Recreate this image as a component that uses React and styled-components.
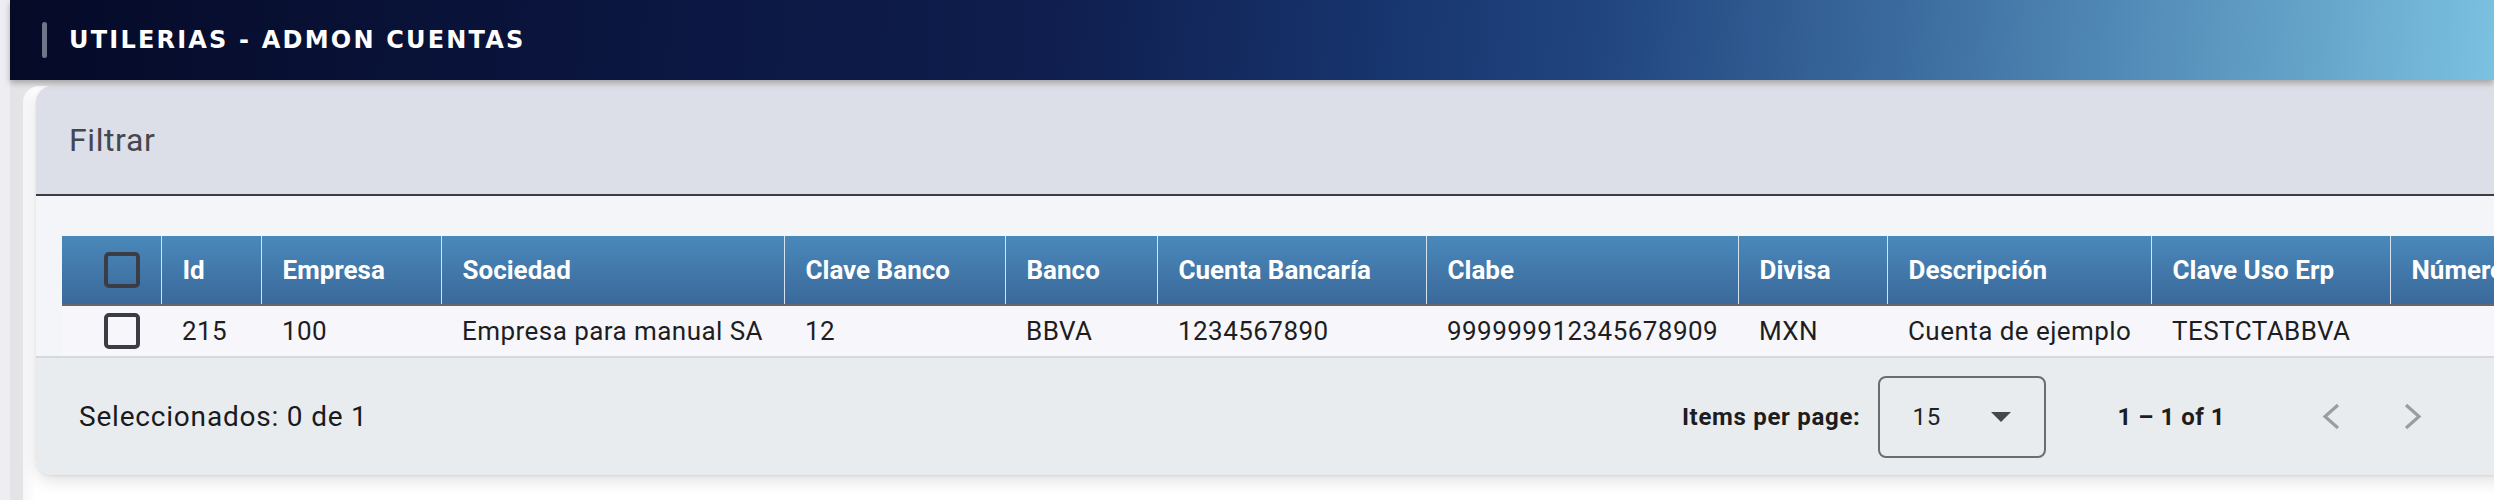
import styled, { createGlobalStyle } from "styled-components";

const GlobalStyle = createGlobalStyle`
  html, body {
    margin: 0;
    padding: 0;
    height: 100%;
    overflow: hidden;
    background: #ececef;
    font-family: Roboto, "Liberation Sans", sans-serif;
  }
  #root {
    height: 100%;
  }
`;

const columns = [
  { label: "Id", width: 100 },
  { label: "Empresa", width: 180 },
  { label: "Sociedad", width: 343 },
  { label: "Clave Banco", width: 221 },
  { label: "Banco", width: 152 },
  { label: "Cuenta Bancaría", width: 269 },
  { label: "Clabe", width: 312 },
  { label: "Divisa", width: 149 },
  { label: "Descripción", width: 264 },
  { label: "Clave Uso Erp", width: 239 },
  { label: "Número de Cuenta", width: 300 },
];

const rows = [
  [
    "215",
    "100",
    "Empresa para manual SA",
    "12",
    "BBVA",
    "1234567890",
    "999999912345678909",
    "MXN",
    "Cuenta de ejemplo",
    "TESTCTABBVA",
    "",
  ],
];

function Chevron({ dir }) {
  const pts = dir === "left" ? "16,2 3,13.5 16,25" : "3,2 16,13.5 3,25";
  return (
    <svg width="19" height="27" viewBox="0 0 19 27">
      <polyline
        points={pts}
        fill="none"
        stroke="#9c9da1"
        strokeWidth="3.2"
        strokeLinejoin="miter"
      />
    </svg>
  );
}

function App() {
  return (
    <Page>
      <GlobalStyle />
      <SideRail />
      <Main>
        <TopBar>
          <Accent />
          <Title>UTILERIAS - ADMON CUENTAS</Title>
        </TopBar>
        <Content>
          <Sheet>
            <Card>
              <FilterBar>Filtrar</FilterBar>
              <TableArea>
                <Table>
                  <colgroup>
                    <col style={{ width: 99 }} />
                    {columns.map((c) => (
                      <col key={c.label} style={{ width: c.width }} />
                    ))}
                  </colgroup>
                  <thead>
                    <tr>
                      <HeadCell>
                        <Check />
                      </HeadCell>
                      {columns.map((c) => (
                        <HeadCell key={c.label}>{c.label}</HeadCell>
                      ))}
                    </tr>
                  </thead>
                  <tbody>
                    {rows.map((r) => (
                      <tr key={r[0]}>
                        <SelectCell>
                          <Check />
                        </SelectCell>
                        {r.map((v, i) => (
                          <Cell key={i}>{v}</Cell>
                        ))}
                      </tr>
                    ))}
                  </tbody>
                </Table>
              </TableArea>
              <Footer>
                <Selected>Seleccionados: 0 de 1</Selected>
                <Paginator>
                  <PageLabel>Items per page:</PageLabel>
                  <SizeSelect>
                    <span>15</span>
                    <Caret />
                  </SizeSelect>
                  <RangeLabel>1 – 1 of 1</RangeLabel>
                  <NavButton aria-label="Previous page">
                    <Chevron dir="left" />
                  </NavButton>
                  <NavButton aria-label="Next page">
                    <Chevron dir="right" />
                  </NavButton>
                </Paginator>
              </Footer>
            </Card>
          </Sheet>
        </Content>
      </Main>
    </Page>
  );
}

const Page = styled.div`
  display: flex;
  height: 100%;
  width: 100%;
`;

const SideRail = styled.div`
  width: 10px;
  flex: none;
  background: #eeeef2;
`;

const Main = styled.div`
  flex: 1;
  min-width: 0;
  display: flex;
  flex-direction: column;
`;

const TopBar = styled.header`
  height: 80px;
  flex: none;
  display: flex;
  align-items: center;
  padding-left: 32px;
  position: relative;
  z-index: 2;
  background: linear-gradient(
    95deg,
    #050a27 0%,
    #0b1640 25%,
    #0f1e4e 42%,
    #183670 56%,
    #21457f 64%,
    #3b6b9e 76%,
    #4f87b4 84%,
    #64a2c8 92%,
    #7bc1e0 100%
  );
  box-shadow: 0 3px 6px rgba(0, 0, 0, 0.28);
`;

const Accent = styled.span`
  width: 5px;
  height: 36px;
  border-radius: 3px;
  background: #70748a;
`;

const Title = styled.h1`
  margin: 0 0 0 22px;
  font-family: "DejaVu Sans", Verdana, sans-serif;
  font-weight: 700;
  font-size: 24px;
  letter-spacing: 2.2px;
  color: #ffffff;
`;

const Content = styled.main`
  flex: 1;
  background: #e4e4e7;
  padding: 6px 0 0 13px;
  overflow: hidden;
`;

const Sheet = styled.div`
  height: 100%;
  background: linear-gradient(90deg, #f6f6f7 0px, #ffffff 13px);
  border-top-left-radius: 16px;
  padding-left: 13px;
  box-sizing: border-box;
`;

const Card = styled.section`
  width: 2560px;
  border-radius: 16px;
  overflow: hidden;
  box-shadow: 0 6px 16px rgba(0, 0, 0, 0.12), 0 1px 3px rgba(0, 0, 0, 0.08);
`;

const FilterBar = styled.div`
  height: 108px;
  display: flex;
  align-items: center;
  padding-left: 33px;
  background: #dcdfe8;
  border-bottom: 2px solid #3b3d44;
  font-size: 32px;
  letter-spacing: 0.6px;
  color: #45474f;
`;

const TableArea = styled.div`
  background: #f4f5f9;
  padding: 40px 0 0 26px;
`;

const Table = styled.table`
  border-collapse: collapse;
  table-layout: fixed;
  width: 2588px;
`;

const HeadCell = styled.th`
  height: 68px;
  padding: 0 0 0 21px;
  text-align: left;
  font-size: 26px;
  font-weight: 700;
  color: #ffffff;
  white-space: nowrap;
  overflow: hidden;
  background: linear-gradient(180deg, #4a88ba 0%, #3a699a 100%);
  border-bottom: 2px solid #64676e;
  & + & {
    border-left: 1px solid rgba(180, 205, 230, 0.45);
  }
  &:first-child {
    padding-left: 42px;
  }
`;

const Cell = styled.td`
  height: 50px;
  padding: 0 0 0 21px;
  background: #f7f7fb;
  font-size: 26px;
  letter-spacing: 0.45px;
  color: #1e1e22;
  white-space: nowrap;
  overflow: hidden;
`;

const SelectCell = styled(Cell)`
  padding-left: 42px;
  box-shadow: 3px 0 5px rgba(0, 0, 0, 0.05);
  position: relative;
`;

const Check = styled.span`
  display: block;
  width: 36px;
  height: 36px;
  box-sizing: border-box;
  border: 4px solid #3c3d44;
  border-radius: 5px;
`;

const Footer = styled.div`
  height: 117px;
  display: flex;
  align-items: center;
  padding: 0 144px 0 43px;
  background: #e9ecef;
  border-top: 2px solid #d5d8dc;
`;

const Selected = styled.span`
  font-size: 28px;
  letter-spacing: 0.8px;
  color: #1a1a1d;
`;

const Paginator = styled.div`
  margin-left: auto;
  display: flex;
  align-items: center;
`;

const PageLabel = styled.span`
  font-size: 24px;
  font-weight: 700;
  letter-spacing: 0.7px;
  color: #1d1d20;
  margin-right: 17px;
`;

const SizeSelect = styled.div`
  width: 168px;
  height: 82px;
  box-sizing: border-box;
  border: 2px solid #6b6d73;
  border-radius: 8px;
  display: flex;
  align-items: center;
  justify-content: space-between;
  padding: 0 33px 0 33px;
  font-size: 24px;
  letter-spacing: 0.6px;
  color: #222226;
`;

const Caret = styled.span`
  width: 0;
  height: 0;
  border-left: 10px solid transparent;
  border-right: 10px solid transparent;
  border-top: 10px solid #46474c;
`;

const RangeLabel = styled.span`
  margin: 0 66px 0 72px;
  font-size: 24px;
  font-weight: 700;
  letter-spacing: 0.5px;
  color: #1d1d20;
`;

const NavButton = styled.button`
  width: 80px;
  height: 80px;
  border: none;
  background: transparent;
  padding: 0;
  display: flex;
  align-items: center;
  justify-content: center;
  & + & {
    margin-left: 1px;
  }
`;

export default App;
